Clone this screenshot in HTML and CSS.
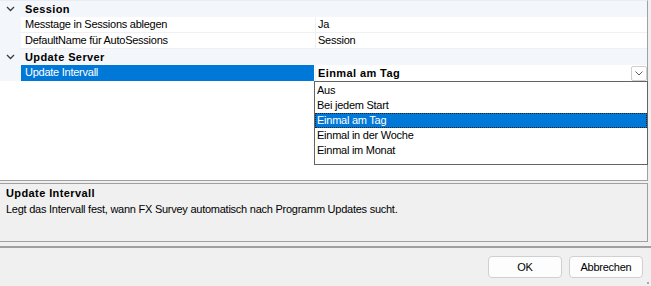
FILE: index.html
```html
<!DOCTYPE html>
<html>
	<head>
		<meta charset="utf-8">
		<link rel="stylesheet" href="styles.css">
	</head>
	<body>
		<div class='dialog'>
			<div class='grid'>
				<div class='row category'>
					<div class='gutter'>
						<svg width="9" height="6" viewBox="0 0 9 6"><polyline points="1,1 4.5,4.5 8,1" fill="none" stroke="#3c3c3c" stroke-width="1.3"/></svg>
					</div>
					<div class='name'>Session</div>
				</div>
				<div class='row'>
					<div class='gutter'></div>
					<div class='name'>Messtage in Sessions ablegen</div>
					<div class='value'>Ja</div>
				</div>
				<div class='row'>
					<div class='gutter'></div>
					<div class='name'>DefaultName für AutoSessions</div>
					<div class='value'>Session</div>
				</div>
				<div class='row category'>
					<div class='gutter'>
						<svg width="9" height="6" viewBox="0 0 9 6"><polyline points="1,1 4.5,4.5 8,1" fill="none" stroke="#3c3c3c" stroke-width="1.3"/></svg>
					</div>
					<div class='name'>Update Server</div>
				</div>
				<div class='row selected'>
					<div class='gutter'></div>
					<div class='name'>Update Intervall</div>
					<div class='value'>
						<span>Einmal am Tag</span>
						<span class='dropbtn'>
							<svg width="8" height="5" viewBox="0 0 8 5"><polyline points="0.5,0.5 4,4 7.5,0.5" fill="none" stroke="#606060" stroke-width="1"/></svg>
						</span>
					</div>
				</div>
				<ul class='droplist'>
					<li>Aus</li>
					<li>Bei jedem Start</li>
					<li class='current'>Einmal am Tag</li>
					<li>Einmal in der Woche</li>
					<li>Einmal im Monat</li>
				</ul>
			</div>
			<div class='help'>
				<div class='help-title'>Update Intervall</div>
				<div>Legt das Intervall fest, wann FX Survey automatisch nach Programm Updates sucht.</div>
			</div>
			<div class='buttons'>
				<button>OK</button>
				<button>Abbrechen</button>
			</div>
			<div class='grip'></div>
		</div>
	</body>
</html>
```

FILE: styles.css
```css
html body {
	margin: 0;
	background-color: #f0f0f0;
	font-family: "Liberation Sans", Arial, sans-serif;
	font-size: 11px;
	letter-spacing: -0.25px;
	color: #000;
}

.dialog {
	position: relative;
	display: flex;
	flex-direction: column;
	width: 651px;
	height: 286px;
}

.grid {
	position: relative;
	width: 647px;
	height: 179px;
	background-color: #fff;
	border-top: 1px solid #e9edf2;
	border-right: 1px solid #a0a0a0;
	border-bottom: 1px solid #a0a0a0;
}

.row {
	display: grid;
	grid-template-columns: 21px 294px 1fr;
	height: 16px;
	line-height: 16px;
}

.gutter {
	display: flex;
	align-items: center;
	justify-content: center;
	padding-bottom: 1px;
	background-color: #f3f6fb;
}

.name {
	padding-left: 4px;
	white-space: nowrap;
}

.row .name,
.row .value {
	box-sizing: border-box;
	border-bottom: 1px solid #eef0f3;
	line-height: 15px;
}

.value {
	border-left: 1px solid #eef0f3;
	padding-left: 2px;
	white-space: nowrap;
}

.row.category {
	background-color: #f3f6fb;
}

.row.category .name {
	grid-column: 2 / 4;
	border-bottom: none;
	line-height: 16px;
	font-weight: bold;
	letter-spacing: 0.4px;
}

.row.selected .name {
	background-color: #0078d7;
	color: #fff;
	margin-right: 1px;
	border-bottom: none;
}

.row.selected .value {
	display: flex;
	justify-content: space-between;
	align-items: flex-start;
	font-weight: bold;
	letter-spacing: 0.4px;
	border-bottom: none;
	line-height: 16px;
}

.dropbtn {
	display: flex;
	align-items: center;
	justify-content: center;
	box-sizing: border-box;
	width: 16px;
	height: 15px;
	margin-top: 1px;
	background-color: #fff;
	border: 1px solid #cfcfcf;
	border-radius: 2px;
}

.droplist {
	position: absolute;
	left: 314px;
	top: 80px;
	box-sizing: border-box;
	width: 334px;
	height: 84px;
	margin: 0;
	padding: 1px 0 0 0;
	list-style: none;
	background-color: #fff;
	border: 1px solid #646464;
}

.droplist li {
	height: 15px;
	line-height: 15px;
	padding-left: 2px;
}

.droplist li.current {
	background-color: #0078d7;
	color: #fff;
	outline: 1px dotted #202020;
	outline-offset: -1px;
}

.help {
	box-sizing: border-box;
	width: 648px;
	height: 59px;
	margin-top: 2px;
	padding: 1px 0 0 6px;
	border: 1px solid #a0a0a0;
	border-left: none;
	line-height: 16px;
}

.help-title {
	font-weight: bold;
	letter-spacing: 0.4px;
}

.buttons {
	display: flex;
	justify-content: flex-end;
	gap: 7px;
	margin-top: 4px;
	padding: 8px 8px 0 0;
	border-top: 2px solid #a0a0a0;
}

.buttons button {
	width: 74px;
	height: 22px;
	padding: 0;
	background-color: #fdfdfd;
	border: 1px solid #d0d0d0;
	border-radius: 4px;
	font-family: inherit;
	font-size: 11px;
	letter-spacing: -0.25px;
	color: #000;
}

.grip {
	position: absolute;
	right: 2px;
	bottom: 2px;
	width: 2px;
	height: 2px;
	background-color: #a8a8a8;
}
```
